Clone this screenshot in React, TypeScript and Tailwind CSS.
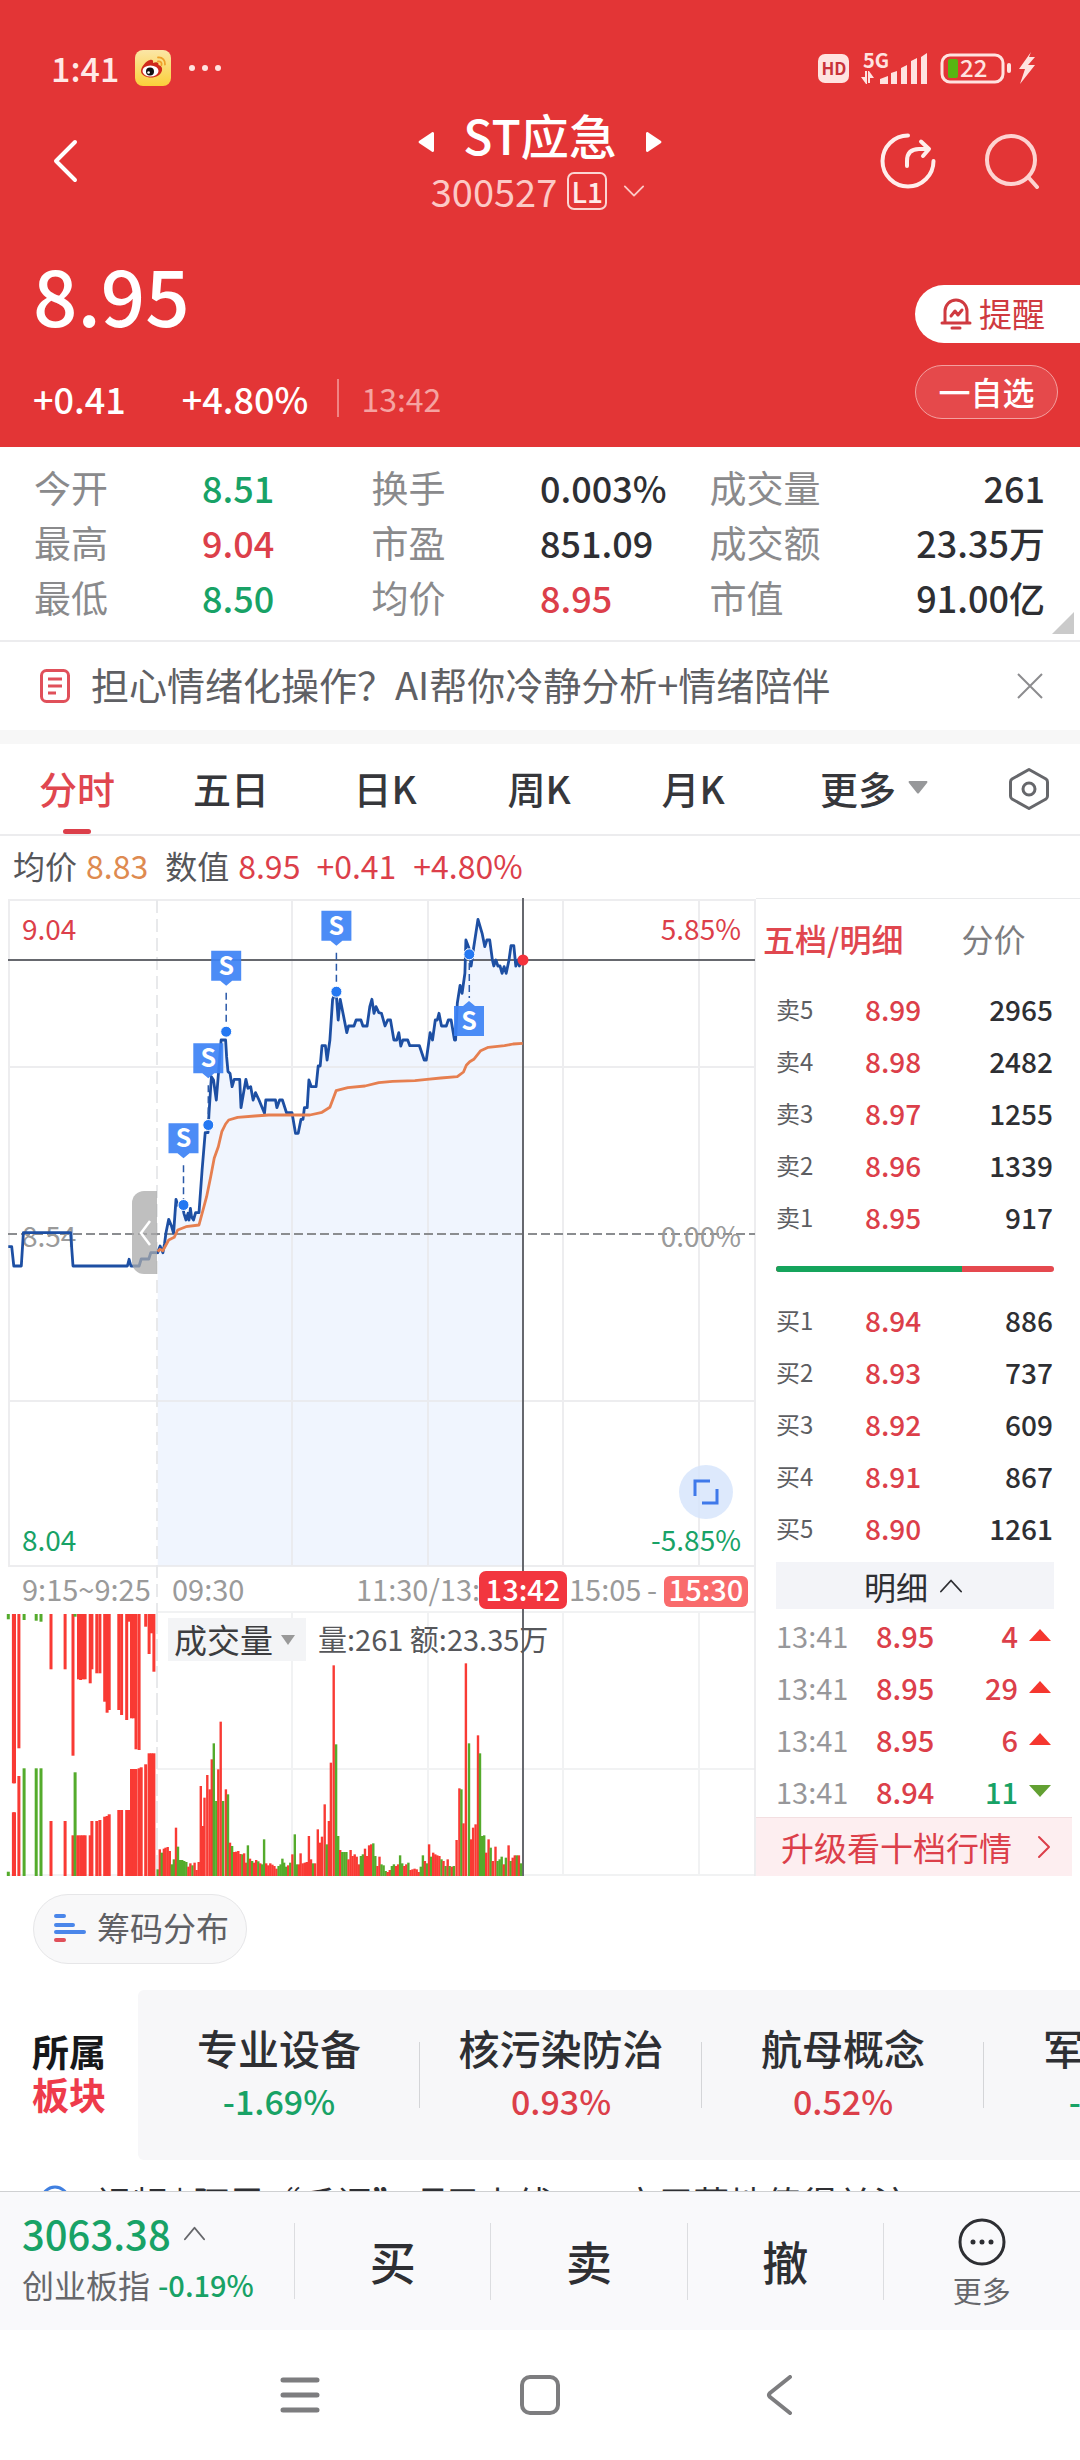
import React from "react";

/* ---------- data ---------- */

const stats = [
  ["今开", "8.51", "down", "换手", "0.003%", "flat", "成交量", "261"],
  ["最高", "9.04", "up", "市盈", "851.09", "flat", "成交额", "23.35万"],
  ["最低", "8.50", "down", "均价", "8.95", "up", "市值", "91.00亿"],
];

const sells = [
  ["卖5", "8.99", "2965"],
  ["卖4", "8.98", "2482"],
  ["卖3", "8.97", "1255"],
  ["卖2", "8.96", "1339"],
  ["卖1", "8.95", "917"],
];

const buys = [
  ["买1", "8.94", "886"],
  ["买2", "8.93", "737"],
  ["买3", "8.92", "609"],
  ["买4", "8.91", "867"],
  ["买5", "8.90", "1261"],
];

const ticks = [
  { time: "13:41", price: "8.95", qty: "4", up: true },
  { time: "13:41", price: "8.95", qty: "29", up: true },
  { time: "13:41", price: "8.95", qty: "6", up: true },
  { time: "13:41", price: "8.94", qty: "11", up: false },
];

const sectors = [
  { name: "专业设备", pct: "-1.69%", up: false },
  { name: "核污染防治", pct: "0.93%", up: true },
  { name: "航母概念", pct: "0.52%", up: true },
  { name: "军民融合", pct: "-0.42%", up: false },
];

const tones: Record<string, string> = {
  up: "text-[#dc3f4a]",
  down: "text-[#18a266]",
  flat: "text-[#2e2f33]",
};

const priceSeries =
  "24,1100 34,1100 40,1158 62,1158 68,1058 205,1058 212,1158 370,1158 375,1138 380,1158 404,1158 410,1137 432,1137 438,1118 458,1118 465,1098 473,1118 478,1090 482,1058 490,1018 498,1038 504,1060 511,958 516,975 530,975 534,1000 540,1020 546,1000 549,1020 553,985 556,1010 562,1020 568,998 578,998 587,870 596,758 604,758 607,700 614,590 620,600 628,660 636,560 642,480 655,480 658,530 662,575 668,580 674,620 680,598 696,598 700,683 714,598 720,625 728,620 735,660 742,638 752,660 768,700 772,660 800,660 804,683 812,660 820,660 832,698 848,698 858,760 866,760 874,718 880,718 884,683 892,683 897,600 904,620 918,620 924,558 930,558 935,497 945,497 950,540 958,480 966,358 976,335 982,420 988,358 998,410 1007,458 1012,438 1028,438 1034,420 1048,420 1054,438 1066,438 1074,380 1080,358 1086,400 1092,380 1100,398 1108,400 1118,438 1126,420 1134,420 1144,480 1152,480 1158,458 1164,498 1170,480 1184,480 1190,497 1218,497 1232,540 1238,540 1246,480 1249,458 1256,480 1264,420 1270,420 1275,400 1282,438 1296,438 1302,420 1310,420 1320,480 1323,480 1328,370 1336,316 1342,340 1350,280 1353,180 1362,205 1368,258 1376,200 1388,118 1400,160 1408,200 1414,180 1422,180 1430,240 1434,258 1440,240 1446,258 1452,258 1458,280 1464,260 1470,280 1478,240 1484,197 1492,197 1498,258 1504,240 1508,258 1518,240";

const averageSeries =
  "458,1115 464,1108 473,1112 490,1080 506,1072 516,1050 540,1040 578,1035 600,950 612,890 622,835 634,800 644,755 655,732 664,720 690,712 740,708 780,705 900,705 935,697 958,682 968,655 976,632 1010,623 1060,618 1100,608 1140,604 1205,602 1240,598 1280,594 1328,590 1346,576 1354,556 1364,545 1376,538 1396,512 1418,502 1465,497 1490,492 1518,490";

const auctionTop =
  "24,88,g 42,580 39,580 55,475 70,90,g 105,92,g 119,95,g 148,238 189,238 212,497 218,80,g 228,268 234,270 241,268 247,268 262,280 267,238 281,250 290,250 304,335 311,368 317,360 345,360 353,375 368,390 375,95 382,385 388,385 395,478 404,480 423,110 433,192 440,130 447,245";

const auctionBottom =
  "24,845,g 42,667 39,667 55,558 70,535,g 105,535,g 119,535,g 148,693 189,693 212,736 218,547,g 226,736 234,736 241,736 247,736 262,736 267,693 281,693 290,690 304,680 311,678 317,673 345,660 353,660 368,660 375,660 382,537 388,537 395,537 404,535 410,532 423,523 433,490 440,490 447,490";

const volumeSeries =
  "458,20,g 464,80 470,70,g 476,82 481,85 487,87 493,75 499,35,g 505,50,g 511,145 517,88,g 523,48,g 529,48,g 535,45,g 541,42,g 547,28 553,38 559,32,g 565,40 571,18 577,42 583,270 589,150 594,235 602,303 609,260 615,350 621,398,g 628,225,g 634,320 641,463 648,225,g 656,260 662,245,g 668,100 674,90,g 680,72 686,73 692,75 698,66 704,65,g 709,68 715,40 720,92,g 726,52 732,45,g 738,40 744,48 750,44,g 756,38 761,35,g 767,110,g 773,38 779,32 785,38 791,34 797,30 803,22 809,30,g 815,35,g 820,52,g 825,40,g 831,28,g 837,32 843,40,g 849,65 856,125,g 862,35,g 868,35 873,68 879,38 885,40 891,42 897,120 903,50 909,38,g 915,38 923,140 929,100 935,118 943,215 949,95,g 955,165 961,340 969,632 976,395,g 982,120,g 988,78 994,72,g 1000,72,g 1006,72,g 1012,50 1018,78 1024,60 1030,65 1036,58 1042,35 1048,60,g 1054,65,g 1060,82 1066,60 1072,92 1078,95 1084,98,g 1090,60,g 1096,30 1102,58 1108,35,g 1114,32,g 1120,15,g 1126,12 1132,18 1138,30,g 1144,35,g 1150,30 1156,35 1162,62,g 1168,38,g 1174,30 1180,35 1186,40,g 1192,18 1198,20 1204,22 1210,20 1216,12 1222,28,g 1228,62,g 1234,45 1240,38,g 1246,95 1252,58,g 1258,70 1264,65 1270,62 1276,60 1282,50,g 1288,45 1294,30,g 1300,50 1306,30,g 1312,28 1318,30,g 1326,108 1334,263 1340,260,g 1346,158 1353,638 1362,398,g 1368,110 1374,145 1381,155 1388,422 1394,368,g 1400,120,g 1406,122,g 1412,70 1419,110 1425,85,g 1431,45 1439,88 1445,45,g 1451,50,g 1457,58,g 1463,35 1469,55,g 1477,92 1483,45,g 1489,55 1495,62 1501,62,g 1507,62 1513,38,g";

const sx = (x: number) => Math.round((x / 2.904) * 10) / 10;
const priceY = (y: number) => Math.round((y / 3 - 18) * 10) / 10;
const volumeY = (y: number) => Math.round((y / 3 + 692) * 10) / 10;

const parse = (s: string) =>
  s.split(" ").map((p) => {
    const [x, y, c] = p.split(",");
    return { x: sx(+x), y: +y, fill: c === "g" ? "#54ab2c" : "#f93a34" };
  });

const line = (s: string) => parse(s).map((p) => `${p.x},${priceY(p.y)}`).join(" ");

const flags = [
  { x: 533, box: 730, dot: 975 },
  { x: 605, box: 490, dot: 735 },
  { x: 657, box: 212, dot: 455 },
  { x: 977, box: 92, dot: 335 },
];

/* ---------- icons ---------- */

function WeiboIcon() {
  return (
    <svg viewBox="0 0 36 36" className="size-9" aria-hidden="true">
      <defs>
        <linearGradient id="wb" x1="0" y1="0" x2="0" y2="1">
          <stop offset="0" stopColor="#fbe6a6" />
          <stop offset="1" stopColor="#fbd03a" />
        </linearGradient>
      </defs>
      <rect width="36" height="36" rx="8" fill="url(#wb)" />
      <path d="M6 21c0-4 5-10 9-11 2.500-.6 3.600.8 3 3 3-1.400 6-1 5.500 2 3 .8 4 3 3.500 5.500C26 25 21 27.500 16 27.500S6 25 6 21z" fill="#cf2a1b" />
      <ellipse cx="15.500" cy="21" rx="8" ry="5.600" fill="#fff" />
      <circle cx="15" cy="21.500" r="4" fill="#111" />
      <circle cx="13.600" cy="22.500" r="1.300" fill="#fff" />
      <path d="M23 7.500c4.500-.5 7.500 3 7 7M23 11.500c2.500-.5 4 1.300 3.500 3.500" fill="none" stroke="#eea02a" strokeWidth="1.800" strokeLinecap="round" />
    </svg>
  );
}

function StatusIcons() {
  return (
    <svg viewBox="0 0 222 36" className="h-9 w-[222px]" role="img" aria-label="HD 5G 22">
      <g fill="#ffe3e0">
        <rect x="1" y="4" width="31" height="29" rx="7" />
        <path d="M44 27h4v-6h2v13h-1z M57 28h-4v5h-2V21h1z" />
        <path d="M63 34v-5l8-3v8z M74 34V23l6-2v13z M84 34V18l6-3v19z M94 34V11l6-3v26z M104 34V7l6-4v31z" />
        <rect x="190" y="13" width="4" height="10" rx="2" />
        <path d="M214 2l-12 17h6l-5 15 15-19h-7l7-8h-6z" />
      </g>
      <rect x="125" y="5" width="61" height="27" rx="8" fill="none" stroke="#ffe3e0" strokeWidth="3" />
      <rect x="131" y="9" width="10" height="19" rx="2" fill="#58b512" />
      <text x="17" y="25" textAnchor="middle" fontSize="17" fontWeight="700" fill="#c8323a" fontFamily='"Noto Sans CJK SC", sans-serif'>HD</text>
      <text x="46" y="18" fontSize="20" fontWeight="700" fill="#ffe3e0" fontFamily='"Noto Sans CJK SC", sans-serif'>5G</text>
      <text x="143" y="27" fontSize="24" fontWeight="500" fill="#ffe3e0" fontFamily='"Noto Sans CJK SC", sans-serif'>22</text>
    </svg>
  );
}

function Chevron({ d, className }: { d: string; className: string }) {
  return (
    <svg viewBox="0 0 24 24" className={className} fill="none" stroke="currentColor" strokeWidth="2" strokeLinecap="round" strokeLinejoin="round" aria-hidden="true">
      <path d={d} />
    </svg>
  );
}

/* ---------- sections ---------- */

function Header() {
  return (
    <header className="flex h-[447px] flex-col bg-[#e33536] text-white">
      <div className="flex items-end justify-between pt-[50px] pr-[41px] pl-[51px]">
        <div className="flex h-9 items-center text-[34px] leading-[34px] font-medium text-[#ffe9e6]">
          <span>1:41</span>
          <span className="ml-[16px]">
            <WeiboIcon />
          </span>
          <span className="ml-[18px] flex gap-[7px]">
            <i className="size-[6px] rounded-full bg-[#ffe3e0]" />
            <i className="size-[6px] rounded-full bg-[#ffe3e0]" />
            <i className="size-[6px] rounded-full bg-[#ffe3e0]" />
          </span>
        </div>
        <StatusIcons />
      </div>

      <div className="mt-[18px] grid grid-cols-[1fr_auto_1fr] items-center">
        <button aria-label="返回" className="ml-[50px] w-8">
          <svg viewBox="0 0 32 46" className="h-[46px] w-8" fill="none" stroke="#fff" strokeWidth="4" strokeLinecap="round" strokeLinejoin="round">
            <path d="M25 4 6 23l19 19" />
          </svg>
        </button>
        <div className="flex flex-col items-center">
          <div className="flex items-center gap-[28px]">
            <button aria-label="上一只" className="pt-4">
              <svg viewBox="0 0 18 22" className="h-[22px] w-[18px]" fill="#fff"><path d="M17 2v18q-1 2-3 0L2 12q-1-1 0-2L14 2q2-2 3 0z" /></svg>
            </button>
            <h1 className="text-[48px] leading-[60px] font-medium">ST应急</h1>
            <button aria-label="下一只" className="pt-4">
              <svg viewBox="0 0 18 22" className="h-[22px] w-[18px]" fill="#fff"><path d="M1 2v18q1 2 3 0l12-8q1-1 0-2L4 2Q2 0 1 2z" /></svg>
            </button>
          </div>
          <div className="flex h-[54px] items-center pr-1 text-[38px] leading-[54px] text-[#fcc9c6]">
            <span>300527</span>
            <span className="ml-[10px] flex h-[38px] w-10 items-center justify-center rounded-[7px] border-2 border-[#fbd5d3] text-[28px] font-medium text-[#ffe9e8]">L1</span>
            <Chevron d="M2 7l10 10L22 7" className="ml-4 size-[22px]" />
          </div>
        </div>
        <div className="mr-[40px] flex items-center justify-end gap-[48px]">
          <button aria-label="分享">
            <svg viewBox="0 0 56 56" className="size-14" fill="none" stroke="#ffeeec" strokeWidth="4" strokeLinecap="round" strokeLinejoin="round">
              <path d="M28 2.500A25.500 25.500 0 1 0 53.500 28" />
              <path d="M27 33v-5q0-12 12-12h9M41 8.500l8 7.500-6 7" />
            </svg>
          </button>
          <button aria-label="搜索">
            <svg viewBox="0 0 56 56" className="size-14" fill="none" stroke="#fdd3d1" strokeWidth="4" strokeLinecap="round">
              <circle cx="27" cy="27" r="24" />
              <path d="M45 45l8 9" />
            </svg>
          </button>
        </div>
      </div>

      <div className="mt-[22px] flex justify-between">
        <div className="pl-[33px]">
          <div className="mt-[7px] text-[78px] leading-[92px] font-medium">8.95</div>
          <div className="mt-[35px] flex items-center text-[36px] leading-[48px] font-medium">
            <span>+0.41</span>
            <span className="ml-[56px]">+4.80%</span>
            <span className="ml-[29px] h-[38px] border-l-2 border-[#f08484]" />
            <span className="ml-[22px] text-[32px] font-normal text-[#f5a3a1]">13:42</span>
          </div>
        </div>
        <div className="mt-[45px] flex flex-col items-start">
          <button className="flex h-[58px] w-[165px] items-center gap-[6px] rounded-l-full bg-white pb-[2px] pl-6 text-[33px] leading-none text-[#cf3a40]">
            <svg viewBox="0 0 34 34" className="size-[34px]" fill="none" stroke="currentColor" strokeWidth="3" strokeLinecap="round" strokeLinejoin="round">
              <path d="M3 27h28M6 27V15a11 11 0 0 1 22 0v12M13 32h8M12 20l4-5 3 4 4-5" />
            </svg>
            提醒
          </button>
          <button className="mt-[22px] flex h-[54px] w-[143px] items-center justify-center rounded-full border border-[#f3a09f] bg-[#e5494b] pb-[2px] text-[32px] leading-none font-medium">一自选</button>
        </div>
      </div>
    </header>
  );
}

function Stats() {
  return (
    <table className="relative w-full table-fixed text-left text-[36px] leading-[55px]">
      <colgroup>
        <col className="w-[18.700%]" />
        <col className="w-[15.700%]" />
        <col className="w-[15.600%]" />
        <col className="w-[15.700%]" />
        <col />
        <col />
      </colgroup>
      <tbody>
        {stats.map((r) => (
          <tr key={r[0]} className="h-[55px]">
            <th className="pl-[34px] text-[37px] font-normal text-[#8a8a8c]">{r[0]}</th>
            <td className={`${tones[r[2]]} font-medium`}>{r[1]}</td>
            <th className="text-[37px] font-normal text-[#8a8a8c]">{r[3]}</th>
            <td className={`${tones[r[5]]} font-medium`}>{r[4]}</td>
            <th className="text-[37px] font-normal text-[#8a8a8c]">{r[6]}</th>
            <td className="pr-[35px] text-right font-medium text-[#2e2f33]">{r[7]}</td>
          </tr>
        ))}
      </tbody>
    </table>
  );
}

function Flag({ x, box, dot }: { x: number; box: number; dot: number }) {
  const cx = sx(x);
  const top = priceY(box);
  return (
    <g>
      <path d={`M${cx} ${top + 42}V${priceY(dot) - 6}`} stroke="#2a59a8" strokeWidth="1.500" strokeDasharray="7 4" />
      <path d={`M${cx - 15} ${top}h30v30h-9l-6 5-6-5h-9z`} fill="#3d82f5" fillOpacity=".92" />
      <text x={cx} y={top + 24} textAnchor="middle" fontSize="25" fontWeight="700" fill="#fff">S</text>
      <circle cx={cx} cy={priceY(dot)} r="5.500" fill="#2478f2" stroke="#fff" strokeWidth="1" />
    </g>
  );
}

function Chart() {
  const top = parse(auctionTop);
  const bottom = parse(auctionBottom);
  const volume = parse(volumeSeries);
  const session = line(priceSeries.slice(priceSeries.indexOf("458,1118")));
  return (
    <div className="relative w-[70%]">
      <svg viewBox="0 0 756 978" className="block h-auto w-full" fontFamily='"Noto Sans CJK SC", sans-serif' role="img" aria-label="分时走势">
        <polygon points={`${session} 522.700,668 157.700,668`} fill="#f0f5fe" />
        <g stroke="#e8e9eb" strokeWidth="2" fill="none">
          <path d="M8 2H756M9 2V668M8 668H755M755 2V978M8 169H755M8 503H755M292 2V668M428 2V668M563 2V668M699 2V668" strokeOpacity=".8" />
          <path d="M157 2V714" strokeDasharray="13 6" />
          <path d="M157 714H755M157 871H755M8 977H755M292 714V978M428 714V978M563 714V978M699 714V978" strokeOpacity=".6" />
          <path d="M157 714V978" strokeDasharray="22 5" />
        </g>
        <path d="M8 336H755" stroke="#8b8d90" strokeWidth="2" strokeDasharray="9 4" />

        <g fontSize="28" fill="#9a9a9a">
          <text x="22" y="349">8.54</text>
          <text x="741" y="349" textAnchor="end">0.00%</text>
          <g fill="#dc3f4a">
            <text x="22" y="42">9.04</text>
            <text x="741" y="42" textAnchor="end">5.85%</text>
          </g>
          <g fill="#18a266">
            <text x="22" y="653">8.04</text>
            <text x="741" y="653" textAnchor="end">-5.85%</text>
          </g>
          <g fontSize="29">
            <text x="22" y="703">9:15~9:25</text>
            <text x="172" y="703">09:30</text>
            <text x="356" y="703">11:30/13:</text>
            <text x="569" y="703">15:05</text>
            <text x="647" y="703">-</text>
          </g>
        </g>

        <path d="M8 62H755M523 0V978" stroke="#66686e" strokeWidth="2" fill="none" />
        <rect x="479" y="673" width="88" height="38" rx="7" fill="#f2363f" />
        <rect x="664" y="678" width="84" height="31" rx="6" fill="#f96b6c" />
        <g fontSize="29" fontWeight="500" fill="#fff" textAnchor="middle">
          <text x="523" y="703">13:42</text>
          <text x="706" y="703">15:30</text>
        </g>

        <polyline points={line(priceSeries)} fill="none" stroke="#1d4fa3" strokeWidth="2.800" strokeLinejoin="round" />
        <polyline points={line(averageSeries)} fill="none" stroke="#e67f50" strokeWidth="2.800" strokeLinejoin="round" />
        {flags.map((f) => (
          <Flag key={f.x} {...f} />
        ))}
        <path d="M469.300 65V100" stroke="#2a59a8" strokeWidth="1.500" strokeDasharray="7 4" />
        <path d="M454 108h9l6-5 6 5h9v30h-30z" fill="#3d82f5" fillOpacity=".92" />
        <text x="469" y="132" textAnchor="middle" fontSize="25" fontWeight="700" fill="#fff">S</text>
        <circle cx="469.300" cy="56.300" r="5.500" fill="#2478f2" stroke="#fff" strokeWidth="1" />
        <circle cx="523" cy="62" r="5.500" fill="#f4323c" />

        {top.map((b, i) => (
          <rect key={i} x={b.x - 1.500} y={716} width="3" height={volumeY(b.y) - 716} fill={b.fill} />
        ))}
        {bottom.map((b, i) => (
          <rect key={i} x={b.x - 1.500} y={volumeY(b.y)} width="3" height={978 - volumeY(b.y)} fill={b.fill} />
        ))}
        {volume.map((b, i) => (
          <rect key={i} x={b.x - 1.200} y={978 - b.y / 3} width="2.400" height={b.y / 3} fill={b.fill} />
        ))}
        <text x="318" y="753" fontSize="29" fill="#56575b">量:261 额:23.35万</text>
      </svg>

      <button aria-label="收起竞价" className="absolute top-[293px] left-[132px] flex h-[83px] w-[25px] items-center justify-center rounded-l-xl bg-[#a9a9a9]/75 text-white">
        <svg viewBox="0 0 14 28" className="h-7 w-[14px]" fill="none" stroke="currentColor" strokeWidth="2.500"><path d="M12 2 3 14l9 12" /></svg>
      </button>
      <button aria-label="全屏" className="absolute top-[567px] right-[23px] flex size-[54px] items-center justify-center rounded-full bg-[#d5e3fb]/80">
        <svg viewBox="0 0 26 26" className="size-[26px]" fill="none" stroke="#3f79ea" strokeWidth="3"><path d="M2 17V2h15M24 10v14H9" /></svg>
      </button>
      <button className="absolute top-[720px] left-[168px] flex h-[43px] w-[138px] items-center gap-2 bg-[#f2f3f5]/95 pl-[6px] text-[33px] leading-none text-[#3c3d40]">
        成交量
        <svg viewBox="0 0 14 10" className="h-[10px] w-[14px]" fill="#999"><path d="M0 0h14L7 10z" /></svg>
      </button>
    </div>
  );
}

function BookTable({ rows, label }: { rows: string[][]; label: string }) {
  return (
    <table aria-label={label} className="w-full table-fixed text-left text-[28px] leading-none">
      <tbody>
        {rows.map(([name, price, qty]) => (
          <tr key={name} className="h-[52px]">
            <th className="w-[109px] pl-5 text-[24px] font-normal text-[#5d5e62]">{name}</th>
            <td className="font-medium text-[#dc3f4a]">{price}</td>
            <td className="pr-[19px] text-right font-medium text-[#2e2f33]">{qty}</td>
          </tr>
        ))}
      </tbody>
    </table>
  );
}

function OrderBook() {
  return (
    <aside className="flex w-[30%] flex-col border-t border-[#e9eaec] pr-2">
      <div className="flex h-[84px] items-center pb-[6px] pl-[7px] text-[32px] leading-none">
        <button className="font-medium text-[#e0474f]">五档/明细</button>
        <button className="ml-[58px] text-[#7d7d80]">分价</button>
      </div>
      <BookTable rows={sells} label="卖盘" />
      <div className="flex h-[51px] items-center pr-[18px] pl-5">
        <div className="flex h-[6px] w-full overflow-hidden rounded-full bg-[#e5494f]">
          <div className="w-[67%] bg-[#15a45c]" />
        </div>
      </div>
      <BookTable rows={buys} label="买盘" />
      <button className="mt-2 mr-[18px] ml-5 flex h-[47px] items-center justify-center gap-3 bg-[#f3f4f8] pr-1 text-[32px] leading-none text-[#2e2f33]">
        明细
        <Chevron d="M1 18 12 6l11 12" className="size-[22px]" />
      </button>
      <table aria-label="成交明细" className="w-full table-fixed text-left text-[29px] leading-none">
        <tbody>
          {ticks.map((t, i) => (
            <tr key={i} className="h-[52px]">
              <td className="w-[120px] pl-5 text-[#97979a]">{t.time}</td>
              <td className="w-[70px] font-medium text-[#dc3f4a]">{t.price}</td>
              <td className={`${t.up ? tones.up : tones.down} text-right font-medium`}>{t.qty}</td>
              <td className="w-[54px] pl-[11px]">
                <svg viewBox="0 0 22 12" className="h-3 w-[22px]" aria-hidden="true">
                  {t.up ? <path d="M0 12h22L11 0z" fill="#f5372f" /> : <path d="M0 0h22L11 12z" fill="#62a032" />}
                </svg>
              </td>
            </tr>
          ))}
        </tbody>
      </table>
      <a href="#level2" className="flex flex-1 items-center justify-between border-t border-[#f3dfe1] bg-[#fdeef0] pr-4 pl-[25px] text-[33px] leading-none text-[#dc3f4a]">
        升级看十档行情
        <Chevron d="M7 2l10 10L7 22" className="size-[24px]" />
      </a>
    </aside>
  );
}

export default function App() {
  return (
    <div className="flex min-h-screen flex-col overflow-hidden bg-white font-['Noto_Sans_CJK_SC',sans-serif]">
      <Header />

      <section className="relative border-b-2 border-[#ececee] pt-[13px] pb-[15px]">
        <Stats />
        <svg viewBox="0 0 22 22" className="absolute right-[6px] bottom-[6px] size-[22px]" fill="#cacaca" aria-hidden="true"><path d="M22 0v22H0z" /></svg>
      </section>

      <section className="box-content flex h-[88px] items-center border-b-[14px] border-[#f7f7f7] pr-[37px] pl-[40px]">
        <svg viewBox="0 0 30 34" className="h-[34px] w-[30px]" fill="none" stroke="#e0505a" strokeWidth="3" aria-hidden="true">
          <rect x="1.500" y="1.500" width="27" height="31" rx="5" />
          <path d="M8 10h14M8 17h14M8 24h8" />
        </svg>
        <p className="ml-[21px] flex-1 pb-1 text-[38px] leading-[52px] text-[#5f6064]">担心情绪化操作？AI帮你冷静分析+情绪陪伴</p>
        <button aria-label="关闭">
          <svg viewBox="0 0 26 26" className="size-[26px]" fill="none" stroke="#8c8c8f" strokeWidth="2"><path d="M1 1l24 24M25 1 1 25" /></svg>
        </button>
      </section>

      <nav className="grid h-[92px] grid-cols-[154fr_154fr_154fr_154fr_154fr_208fr_102fr] border-b-2 border-[#ececee] text-[38px] leading-none font-medium text-[#36373b]">
        <button className="relative pb-[3px] text-[#e0474f]">
          分时
          <span className="absolute bottom-0 left-1/2 h-[5px] w-7 -translate-x-1/2 rounded-sm bg-[#dc3f4a]" />
        </button>
        <button className="pb-[3px]">五日</button>
        <button className="pb-[3px]">日K</button>
        <button className="pb-[3px]">周K</button>
        <button className="pb-[3px]">月K</button>
        <button className="flex items-center justify-center gap-3 pb-[3px]">
          更多
          <svg viewBox="0 0 20 13" className="h-[13px] w-5" fill="#97989a"><path d="M1 0h18q1 1 0 2l-8 10q-1 1-2 0L1 2Q0 1 1 0z" /></svg>
        </button>
        <button aria-label="设置" className="flex items-center justify-center">
          <svg viewBox="0 0 44 44" className="size-11" fill="none" stroke="#66676b" strokeWidth="3" strokeLinejoin="round">
            <path d="M22 2.500 39 12q1.500 1 1.500 3v14q0 2-1.500 3L22 41.500 5 32q-1.500-1-1.500-3V15q0-2 1.500-3z" />
            <circle cx="22" cy="22" r="6" />
          </svg>
        </button>
      </nav>

      <div className="flex h-[62px] items-center pb-1 pl-[13px] text-[32px] leading-none whitespace-nowrap text-[#55565a]">
        <span>均价</span>
        <span className="ml-[9px] text-[#de8a50]">8.83</span>
        <span className="ml-[17px]">数值</span>
        <span className="ml-[9px] text-[#dc3f4a]">8.95</span>
        <span className="ml-[16px] text-[#dc3f4a]">+0.41</span>
        <span className="ml-[17px] text-[#dc3f4a]">+4.80%</span>
      </div>

      <section className="flex">
        <Chart />
        <OrderBook />
      </section>

      <div className="px-[33px] pt-[18px]">
        <button className="flex h-[70px] w-[214px] items-center gap-[11px] rounded-full border border-[#e6e6e8] bg-[#f8f8f9] pb-[3px] pl-5 text-[33px] leading-none text-[#5f6064]">
          <svg viewBox="0 0 32 30" className="h-[30px] w-8" strokeWidth="4" strokeLinecap="round" aria-hidden="true">
            <path d="M2 3h8M2 12h17M2 19h28" stroke="#4a86ea" />
            <path d="M2 27h8" stroke="#e0505a" />
          </svg>
          筹码分布
        </button>
      </div>

      <section className="mt-[26px] flex h-[170px]">
        <h2 className="w-[138px] shrink-0 pt-[40px] pl-[32px] text-[37px] leading-[43px] font-bold text-[#17181a]">
          所属<br />
          <span className="text-[#ee3b4b]">板块</span>
        </h2>
        <ul className="flex flex-1 overflow-hidden rounded-l-md bg-[#f7f7f9]">
          {sectors.map((s) => (
            <li key={s.name} className="relative flex w-[282px] shrink-0 flex-col items-center pt-[30px]">
              <span className="text-[41px] leading-[54px] font-medium text-[#2e2f33]">{s.name}</span>
              <span className={`${s.up ? tones.up : tones.down} text-[34px] leading-[54px] font-medium`}>{s.pct}</span>
              <i className="absolute top-[52px] right-0 h-[66px] border-l border-[#d4d5d8]" />
            </li>
          ))}
        </ul>
      </section>

      <div className="flex h-[31px] items-start overflow-hidden pt-[25px] pl-[40px] whitespace-nowrap">
        <svg viewBox="0 0 30 30" className="size-[30px] shrink-0" fill="none" stroke="#3f7fe0" strokeWidth="3" aria-hidden="true"><circle cx="15" cy="15" r="13" /></svg>
        <span className="ml-[25px] text-[36px] leading-[34px] text-[#2e2f33]">视频 | 阿里“千问”项目上线，AI应用落地值得关注</span>
      </div>

      <footer className="flex h-[139px] items-stretch border-t border-[#cfd0d2] bg-[#f9f9fb] text-[#2e2f33]">
        <button className="flex w-[294px] shrink-0 flex-col justify-center pb-[6px] pl-[22px] text-left whitespace-nowrap">
          <span className="flex items-center gap-3 text-[40px] leading-[52px] font-medium text-[#18a266]">
            3063.38
            <Chevron d="M2 18 12 6l10 12" className="size-[23px] text-[#66676b]" />
          </span>
          <span className="flex items-center gap-2 text-[32px] leading-[50px] text-[#66676b]">
            创业板指
            <span className="text-[29px] font-medium text-[#18a266]">-0.19%</span>
          </span>
        </button>
        <div className="my-[31px] grid flex-1 grid-cols-4 grid-rows-[77px] divide-x divide-[#dcdde0] border-l border-[#dcdde0] text-[46px] leading-none font-medium">
          <button className="pb-1">买</button>
          <button className="pb-1">卖</button>
          <button className="pb-1">撤</button>
          <button className="flex flex-col items-center justify-center gap-[10px] text-[29px] font-normal text-[#66676b]">
            <svg viewBox="0 0 48 48" className="size-12 shrink-0 text-[#2e2f33]" fill="none" stroke="currentColor" strokeWidth="3">
              <circle cx="24" cy="24" r="22" />
              <path d="M15 24h.01M24 24h.01M33 24h.01" strokeWidth="5" strokeLinecap="round" />
            </svg>
            更多
          </button>
        </div>
      </footer>

      <nav className="flex h-[130px] items-center justify-center gap-[200px] bg-white text-[#7d7d7f]">
        <button aria-label="最近任务">
          <svg viewBox="0 0 40 40" className="size-10" fill="none" stroke="currentColor" strokeWidth="5" strokeLinecap="round"><path d="M3 5h34M3 20h34M3 35h34" /></svg>
        </button>
        <button aria-label="主屏幕">
          <svg viewBox="0 0 40 40" className="size-10" fill="none" stroke="currentColor" strokeWidth="4"><rect x="2" y="2" width="36" height="36" rx="8" /></svg>
        </button>
        <button aria-label="返回上级">
          <svg viewBox="0 0 40 40" className="size-10" fill="none" stroke="currentColor" strokeWidth="4" strokeLinecap="round" strokeLinejoin="round"><path d="M30 2 10 18q-2 2 0 4l20 16" /></svg>
        </button>
      </nav>
    </div>
  );
}
